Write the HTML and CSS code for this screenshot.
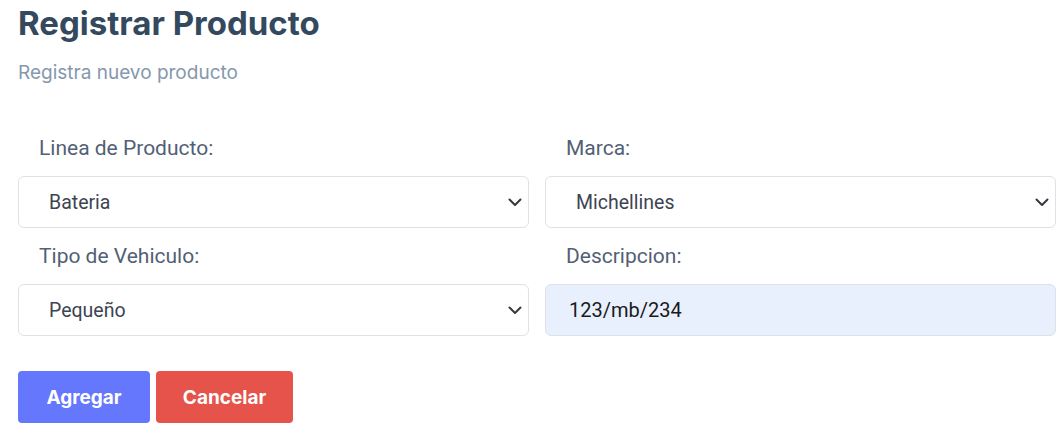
FILE: index.html
```html
<!DOCTYPE html>
<html lang="es">
<head>
<meta charset="utf-8">
<title>Registrar Producto</title>
<link rel="stylesheet" href="styles.css">
</head>
<body>
<main class="page">
  <header class="head">
    <h1 class="title">Registrar Producto</h1>
    <p class="subtitle">Registra nuevo producto</p>
  </header>
  <form class="form">
    <div class="grid">
      <div class="field">
        <label class="label" for="linea">Linea de Producto:</label>
        <div class="select-wrap">
          <select id="linea" class="control"><option>Bateria</option></select>
          <svg class="chev" width="14" height="9" viewBox="0 0 14 9"><path d="M1.5 1.5 L7 7 L12.5 1.5" fill="none" stroke="#343a40" stroke-width="2" stroke-linecap="round" stroke-linejoin="round"/></svg>
        </div>
      </div>
      <div class="field">
        <label class="label" for="marca">Marca:</label>
        <div class="select-wrap">
          <select id="marca" class="control"><option>Michellines</option></select>
          <svg class="chev" width="14" height="9" viewBox="0 0 14 9"><path d="M1.5 1.5 L7 7 L12.5 1.5" fill="none" stroke="#343a40" stroke-width="2" stroke-linecap="round" stroke-linejoin="round"/></svg>
        </div>
      </div>
      <div class="field">
        <label class="label" for="tipo">Tipo de Vehiculo:</label>
        <div class="select-wrap">
          <select id="tipo" class="control"><option>Pequeño</option></select>
          <svg class="chev" width="14" height="9" viewBox="0 0 14 9"><path d="M1.5 1.5 L7 7 L12.5 1.5" fill="none" stroke="#343a40" stroke-width="2" stroke-linecap="round" stroke-linejoin="round"/></svg>
        </div>
      </div>
      <div class="field">
        <label class="label" for="desc">Descripcion:</label>
        <input id="desc" class="control input-filled" type="text" value="123/mb/234">
      </div>
    </div>
    <div class="actions">
      <button type="button" class="btn btn-primary">Agregar</button>
      <button type="button" class="btn btn-danger">Cancelar</button>
    </div>
  </form>
</main>
</body>
</html>
```
FILE: styles.css
```css
* { box-sizing: border-box; }
html, body { margin: 0; padding: 0; background: #fff; }
.page {
  padding: 3px 8px 0 18px;
  font-family: Roboto, "Liberation Sans", sans-serif;
}
.head { display: flex; flex-direction: column; }
.title {
  margin: 0;
  font-family: Inter, "Open Sans", sans-serif;
  font-weight: 700;
  font-size: 33px;
  line-height: 40px;
  color: #34495e;
}
.subtitle {
  margin: 18px 0 0 0;
  font-family: Inter, "Open Sans", sans-serif;
  font-size: 19px;
  line-height: 24px;
  color: #8598ad;
}
.form { margin-top: 35px; }
.grid {
  display: grid;
  grid-template-columns: 1fr 1fr;
  column-gap: 16px;
}
.field { display: flex; flex-direction: column; }
.label {
  height: 56px;
  display: flex;
  align-items: center;
  padding-left: 21px;
  font-size: 21px;
  color: #525f75;
}
.select-wrap { position: relative; }
.control {
  display: block;
  width: 100%;
  height: 52px;
  margin: 0;
  padding: 0 40px 0 30px;
  border: 1px solid #dee2e6;
  border-radius: 6px;
  background: #fff;
  font-family: Roboto, "Liberation Sans", sans-serif;
  font-size: 19.5px;
  color: #3d4452;
  -webkit-appearance: none;
  appearance: none;
  outline: none;
}
.input-filled {
  background: #e8f0fe;
  color: #1a1a1a;
  padding-left: 23px;
  font-size: 20px;
}
.chev {
  position: absolute;
  right: 7px;
  top: 22px;
  pointer-events: none;
}
.actions {
  display: flex;
  gap: 6px;
  margin-top: 35px;
}
.btn {
  height: 52px;
  border: none;
  border-radius: 4px;
  padding: 0;
  font-family: Inter, "Open Sans", sans-serif;
  font-weight: 700;
  font-size: 19px;
  color: #fff;
  cursor: pointer;
}
.btn-primary { background: #6477fd; width: 132px; }
.btn-danger { background: #e5534b; width: 137px; }
```
